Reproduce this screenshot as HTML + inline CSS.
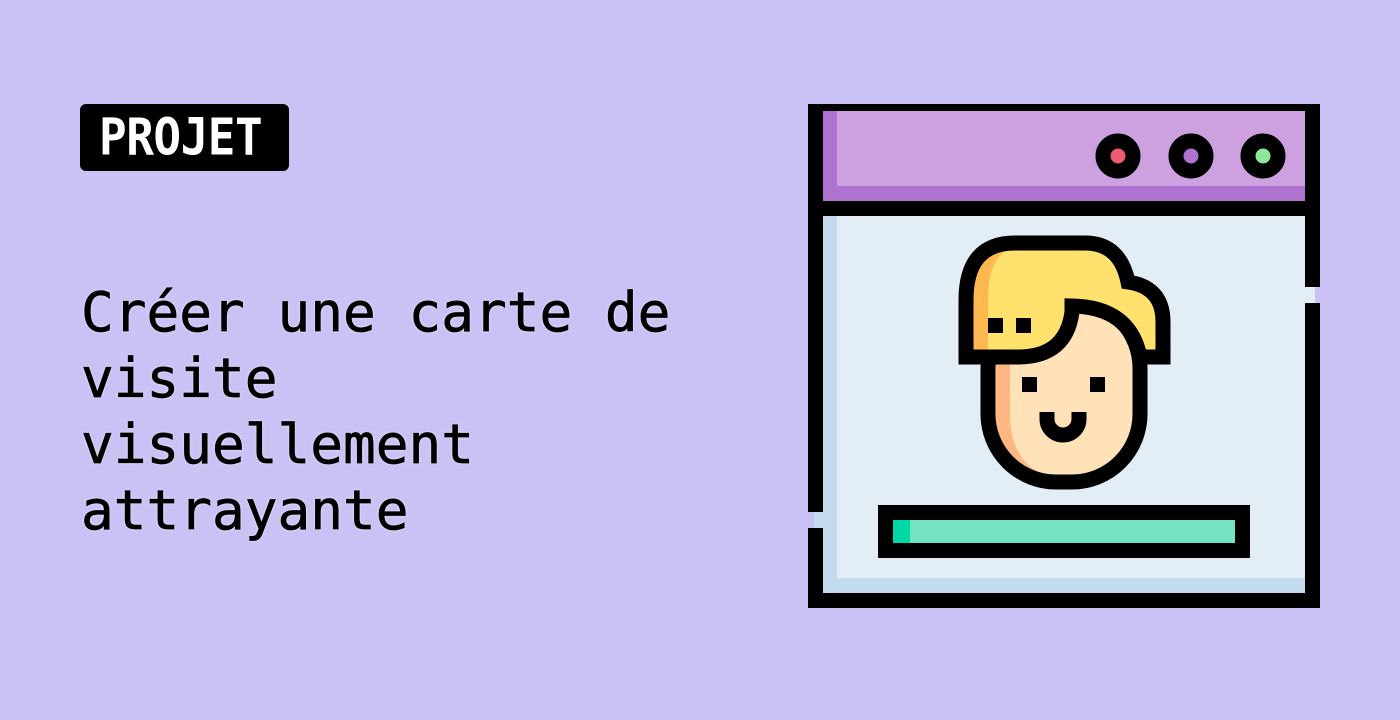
<!DOCTYPE html>
<html><head><meta charset="utf-8"><style>
html,body{margin:0;padding:0}
body{width:1400px;height:720px;background:#cac2f4;position:relative;overflow:hidden;font-family:"DejaVu Sans Mono","Liberation Mono",monospace}
.tag{position:absolute;left:80px;top:104px;width:209px;height:67px;background:#000;border-radius:6px}
.tag span{position:absolute;left:19px;top:7px;color:#fff;font-weight:bold;font-size:46px;line-height:52px;transform:scaleY(1.1);transform-origin:0 50%;letter-spacing:-0.5px}
.title{position:absolute;left:81px;top:280px;font-size:54.4px;line-height:66px;color:#000;-webkit-text-stroke:0.7px #000;text-shadow:0 0 3px rgba(255,255,255,.7)}
svg{position:absolute;left:0;top:0}
</style></head><body>
<div class="tag"><span>PROJET</span></div>
<div class="title">Créer une carte de<br>visite<br>visuellement<br>attrayante</div>
<svg width="1400" height="720" viewBox="0 0 1400 720">
<rect x="808" y="104" width="512" height="504" fill="#000"/>
<rect x="823" y="111" width="482" height="90" fill="#b072d1"/>
<rect x="837" y="111" width="468" height="75" fill="#cda0e0"/>
<rect x="823" y="216" width="482" height="377" fill="#c3d9ed"/>
<rect x="837" y="216" width="468" height="362" fill="#e2edf6"/>
<rect x="1305" y="287" width="16" height="16" fill="#e2edf6"/>
<rect x="1315" y="287" width="6" height="16" fill="#cac2f4"/>
<rect x="807" y="512" width="16" height="16" fill="#c3d9ed"/>
<rect x="807" y="512" width="7" height="16" fill="#cac2f4"/>
<g stroke="#000" stroke-width="15">
<circle cx="1118" cy="156" r="15" fill="#ef5a73"/>
<circle cx="1191" cy="156" r="15" fill="#b072d1"/>
<circle cx="1263" cy="156" r="15" fill="#8fe89a"/>
</g>
<rect x="988" y="300" width="152" height="182" rx="68" fill="#ffe2b8"/>
<path d="M996,340 H1010 V420 Q1013,465 1048,476 Q996,470 996,420 Z" fill="#ffb782"/>
<rect x="988" y="300" width="152" height="182" rx="68" fill="none" stroke="#000" stroke-width="15"/>
<path d="M966,357 V300 Q966,243 1015,243 H1085 Q1120,243 1128,282 Q1163,287 1163,322 V357 H1140 Q1130,307 1072,306 V312 Q1066,357 1018,357 Z" fill="#ffe16e"/>
<path d="M973,350 V300 Q973,255 1006,250 Q988,262 988,300 V350 Z" fill="#ffb74f"/>
<path d="M966,357 V300 Q966,243 1015,243 H1085 Q1120,243 1128,282 Q1163,287 1163,322 V357 H1140 Q1130,307 1072,306 V312 Q1066,357 1018,357 Z" fill="none" stroke="#000" stroke-width="15"/>
<rect x="988" y="318" width="15" height="15" fill="#000"/>
<rect x="1016" y="318" width="15" height="15" fill="#000"/>
<rect x="1022" y="377" width="15" height="15" fill="#000"/>
<rect x="1090" y="377" width="15" height="15" fill="#000"/>
<path d="M1047,412 V419 A16,16 0 0 0 1079,419 V412" fill="none" stroke="#000" stroke-width="15"/>
<rect x="878" y="505" width="372" height="53" fill="#000"/>
<rect x="893" y="520" width="342" height="23" fill="#74e3c1"/>
<rect x="893" y="520" width="17" height="23" fill="#00d9a6"/>
</svg>
</body></html>
